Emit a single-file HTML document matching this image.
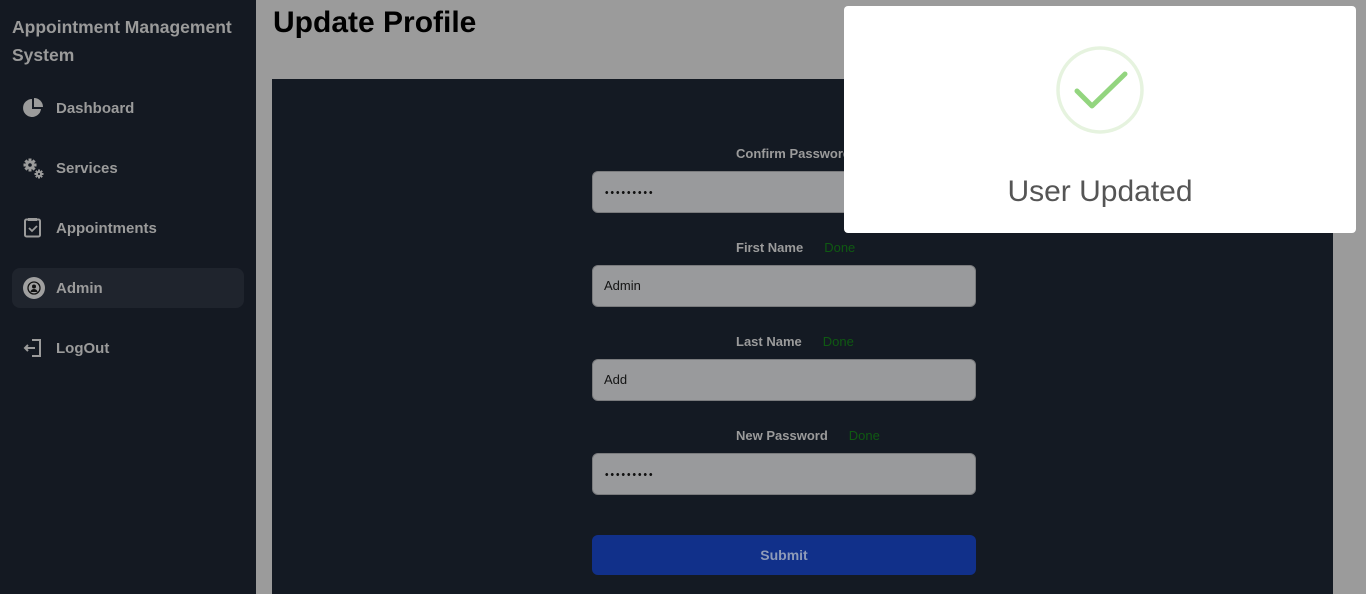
<!DOCTYPE html>
<html><head><meta charset="utf-8">
<style>
*{box-sizing:border-box;margin:0;padding:0}
body{width:1366px;height:594px;overflow:hidden;background:#9b9b9b;font-family:"Liberation Sans",sans-serif;position:relative}
.side{position:absolute;left:0;top:0;width:256px;height:594px;background:#141922}
.brand{position:absolute;left:12px;top:13px;color:#9a9a9a;font-size:17.5px;font-weight:bold;line-height:28px;width:240px}
.nav{position:absolute;left:12px;width:232px;height:40px;border-radius:8px;color:#9b9b9b;font-weight:bold;font-size:15px;line-height:42px;padding-left:44px}
.nav svg{position:absolute;left:10px;top:9px}
.nav.act{background:#1f242d}
h1{position:absolute;left:273px;top:6px;font-size:30px;font-weight:bold;color:#000}
.panel{position:absolute;left:272px;top:79px;width:1061px;height:515px;background:#141a23}
.lbl{position:absolute;left:736px;color:#9b9b9b;font-size:13px;font-weight:bold}
.done{color:#0f5a12;font-weight:normal;margin-left:21px}
.inp{position:absolute;left:592px;width:384px;height:42px;background:#999a9c;border-radius:6px;border:1px solid #7a7b7d;color:#141414;font-size:13px;line-height:40px;padding-left:11px}
.dots{position:absolute;left:11px;top:19px;width:50px;height:3px;background:radial-gradient(circle,#111 1.3px,transparent 1.6px) 0 0/5.5px 3px repeat-x}
.btn{position:absolute;left:592px;top:535px;width:384px;height:40px;background:#11308a;border-radius:6px;color:#8f9bb8;font-weight:bold;font-size:14px;text-align:center;line-height:40px}
.modal{position:absolute;left:844px;top:6px;width:512px;height:227px;background:#fff;border-radius:4px}
.modal .t{position:absolute;left:0;width:100%;top:169px;text-align:center;font-size:30px;color:#555;}
</style></head><body>
<div class="side">
<div class="brand">Appointment Management System</div>
<div class="nav" style="top:88px"><svg width="22" height="22" viewBox="0 0 22 22"><path d="M10 2a9 9 0 1 0 9 10h-9z" fill="#9b9b9b"/><path d="M12 1v9h9a9 9 0 0 0-9-9z" fill="#9b9b9b"/></svg>Dashboard</div>
<div class="nav" style="top:148px"><svg width="24" height="24" viewBox="0 0 24 24"><g fill="#9b9b9b"><circle cx="8" cy="8" r="4.5"/><rect x="6.5" y="1.5" width="3" height="13"/><rect x="1.5" y="6.5" width="13" height="3"/><rect x="6.5" y="1.5" width="3" height="13" transform="rotate(45 8 8)"/><rect x="6.5" y="1.5" width="3" height="13" transform="rotate(-45 8 8)"/><circle cx="17" cy="17" r="3"/><rect x="16" y="12.5" width="2" height="9"/><rect x="12.5" y="16" width="9" height="2"/><rect x="16" y="12.5" width="2" height="9" transform="rotate(45 17 17)"/><rect x="16" y="12.5" width="2" height="9" transform="rotate(-45 17 17)"/></g><circle cx="8" cy="8" r="1.8" fill="#141922"/><circle cx="17" cy="17" r="1.1" fill="#141922"/></svg>Services</div>
<div class="nav" style="top:208px"><svg width="22" height="22" viewBox="0 0 22 22"><rect x="3" y="2.5" width="15" height="17" rx="1.5" fill="none" stroke="#9b9b9b" stroke-width="2"/><rect x="6" y="1" width="9" height="3" fill="#9b9b9b"/><path d="M7 11l3 3 5-5" fill="none" stroke="#9b9b9b" stroke-width="1.8"/></svg>Appointments</div>
<div class="nav act" style="top:268px"><svg width="24" height="24" viewBox="0 0 24 24"><circle cx="12" cy="11" r="11" fill="#a0a0a0"/><circle cx="12" cy="11" r="6" fill="none" stroke="#111" stroke-width="1.3"/><circle cx="12" cy="9.5" r="2" fill="#111"/><path d="M8.5 15a3.5 3 0 0 1 7 0z" fill="#111"/></svg>Admin</div>
<div class="nav" style="top:328px"><svg width="22" height="22" viewBox="0 0 22 22"><path d="M10 3h8v16h-8" fill="none" stroke="#9b9b9b" stroke-width="2"/><path d="M13 11H3M6 8l-3 3 3 3" fill="none" stroke="#9b9b9b" stroke-width="2"/></svg>LogOut</div>
</div>
<h1>Update Profile</h1>
<div class="panel"></div>
<div class="lbl" style="top:146px">Confirm Password</div>
<div class="inp" style="top:171px"><div class="dots"></div></div>
<div class="lbl" style="top:240px">First Name<span class="done">Done</span></div>
<div class="inp" style="top:265px">Admin</div>
<div class="lbl" style="top:334px">Last Name<span class="done">Done</span></div>
<div class="inp" style="top:359px">Add</div>
<div class="lbl" style="top:428px">New Password<span class="done">Done</span></div>
<div class="inp" style="top:453px"><div class="dots"></div></div>
<div class="btn">Submit</div>
<div class="modal">
<svg style="position:absolute;left:210px;top:38px" width="92" height="92" viewBox="0 0 92 92"><circle cx="46" cy="46" r="42" fill="none" stroke="#e6f3df" stroke-width="3.5"/><path d="M23 47l15 15 33-32" fill="none" stroke="#93d57f" stroke-width="5" stroke-linecap="round" stroke-linejoin="round"/></svg>
<div class="t">User Updated</div>
</div>
</body></html>
